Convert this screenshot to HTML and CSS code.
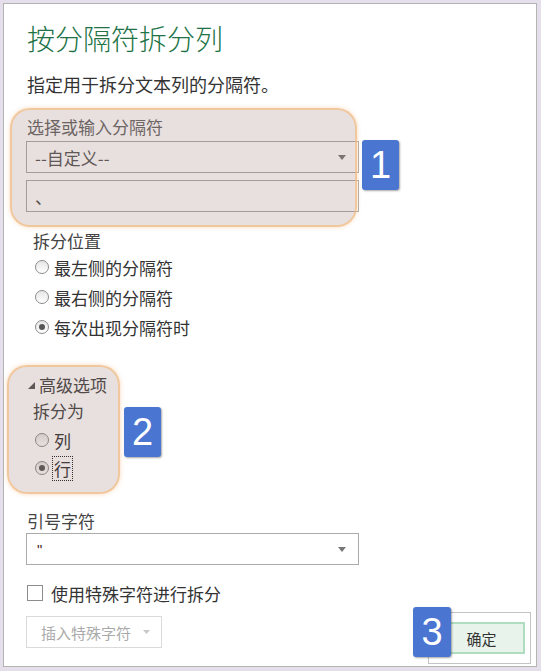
FILE: index.html
```html
<!DOCTYPE html>
<html lang="zh-CN">
<head>
<meta charset="utf-8">
<title>按分隔符拆分列</title>
<link rel="stylesheet" href="styles.css">
</head>
<body>
<div class="panel">
  <h1 class="title">按分隔符拆分列</h1>
  <p class="subtitle">指定用于拆分文本列的分隔符。</p>

  <div class="label sel-label">选择或输入分隔符</div>
  <div class="select sel-delim">
    <span class="sel-text">--自定义--</span>
    <svg class="arrow" width="8" height="5" viewBox="0 0 8 5"><polygon points="0,0 8,0 4,5"/></svg>
  </div>
  <div class="select text-input">、</div>

  <div class="label group-label">拆分位置</div>
  <div class="radios">
    <div class="radio-row"><span class="radio"></span><span>最左侧的分隔符</span></div>
    <div class="radio-row"><span class="radio"></span><span>最右侧的分隔符</span></div>
    <div class="radio-row"><span class="radio on"></span><span>每次出现分隔符时</span></div>
  </div>

  <div class="adv">
    <svg class="tri" width="7" height="7" viewBox="0 0 7 7"><polygon points="7,0 7,7 0,7"/></svg>
    <span>高级选项</span>
  </div>
  <div class="label split-as">拆分为</div>
  <div class="radios tight">
    <div class="radio-row"><span class="radio"></span><span>列</span></div>
    <div class="radio-row"><span class="radio on"></span><span class="focus">行</span></div>
  </div>

  <div class="label quote-label">引号字符</div>
  <div class="select sel-quote">
    <span class="quote">"</span>
    <svg class="arrow" width="8" height="5" viewBox="0 0 8 5"><polygon points="0,0 8,0 4,5"/></svg>
  </div>

  <div class="check-row"><span class="checkbox"></span><span>使用特殊字符进行拆分</span></div>

  <div class="footer">
    <div class="insert-btn">
      <span>插入特殊字符</span>
      <svg class="arrow light" width="7" height="4" viewBox="0 0 7 4"><polygon points="0,0 7,0 3.5,4"/></svg>
    </div>
    <div class="ok-wrap"><div class="ok-btn">确定</div></div>
  </div>

  <div class="hl hl1"></div>
  <div class="hl hl2"></div>
  <div class="badge b1">1</div>
  <div class="badge b2">2</div>
  <div class="badge b3">3</div>
</div>
</body>
</html>
```
FILE: styles.css
```css
html, body {
  margin: 0;
  padding: 0;
}
body {
  background: #e4dfeb;
  font-family: "Noto Sans CJK SC", "Noto Sans", sans-serif;
  color: #333;
}
.panel {
  position: relative;
  box-sizing: border-box;
  width: 534px;
  height: 664px;
  margin: 3px;
  background: #fff;
  border: 1px solid #b4b4b4;
  padding: 17px 5px 0 22px;
}
.title {
  margin: 0;
  font-size: 28px;
  line-height: 34px;
  font-weight: 300;
  color: #217346;
  padding-left: 1px;
}
.subtitle {
  margin: 17px 0 0;
  font-size: 18px;
  line-height: 24px;
  color: #333;
  padding-left: 1px;
}
.label {
  font-size: 17px;
  line-height: 22px;
  color: #444;
}
.sel-label {
  margin-top: 20px;
  color: #666;
  padding-left: 1px;
}
.select {
  box-sizing: border-box;
  width: 333px;
  height: 32px;
  border: 1px solid #ababab;
  display: flex;
  align-items: center;
  justify-content: space-between;
  padding: 0 12px 0 8px;
  font-size: 17px;
  color: #555;
  background: #fff;
}
.sel-delim {
  margin-top: 3px;
}
.text-input {
  margin-top: 7px;
  color: #444;
}
.arrow {
  fill: #777;
  flex: none;
}
.arrow.light {
  fill: #c8c8c8;
}
.group-label {
  margin-top: 18px;
  padding-left: 7px;
}
.radios {
  display: flex;
  flex-direction: column;
}
.radio-row {
  display: flex;
  align-items: center;
  gap: 5px;
  height: 30px;
  padding-left: 9px;
  font-size: 17px;
  color: #333;
}
.tight {
  margin-top: 4px;
}
.tight .radio-row {
  height: 28px;
}
.radio {
  position: relative;
  box-sizing: border-box;
  width: 14px;
  height: 14px;
  border-radius: 50%;
  border: 1px solid #8c8c8c;
  background: linear-gradient(#e6e6e6, #fff);
  flex: none;
}
.radio.on::after {
  content: "";
  position: absolute;
  left: 3px;
  top: 3px;
  width: 6px;
  height: 6px;
  border-radius: 50%;
  background: #555;
}
.focus {
  border: 1px dotted #222;
  padding: 0 1px;
  line-height: 23px;
  margin-left: -2px;
}
.adv {
  margin-top: 32px;
  display: flex;
  align-items: center;
  gap: 4px;
  padding-left: 2px;
  font-size: 17px;
  line-height: 22px;
  color: #444;
}
.tri {
  fill: #555;
  flex: none;
}
.split-as {
  margin-top: 4px;
  padding-left: 7px;
}
.quote-label {
  margin-top: 28px;
  padding-left: 1px;
}
.sel-quote {
  margin-top: 1px;
  padding-left: 10px;
}
.quote {
  font-family: "Liberation Sans", sans-serif;
  font-size: 15px;
  color: #4a2a2a;
}
.check-row {
  margin-top: 17px;
  display: flex;
  align-items: center;
  gap: 8px;
  padding-left: 1px;
  height: 22px;
  font-size: 17px;
  color: #333;
}
.checkbox {
  box-sizing: border-box;
  width: 16px;
  height: 16px;
  border: 1px solid #8c8c8c;
  background: #fff;
  flex: none;
}
.footer {
  margin-top: 12px;
  display: flex;
  justify-content: space-between;
  align-items: flex-start;
}
.insert-btn {
  box-sizing: border-box;
  width: 136px;
  height: 32px;
  border: 1px solid #dadada;
  display: flex;
  align-items: center;
  gap: 12px;
  padding-left: 14px;
  font-size: 15px;
  color: #aaa;
}
.ok-wrap {
  box-sizing: border-box;
  width: 103px;
  height: 52px;
  margin-top: -4px;
  border: 1px solid #c4c4c4;
  padding: 9px 5px 9px 9px;
}
.ok-btn {
  box-sizing: border-box;
  height: 32px;
  border: 2px solid #b0dcc0;
  background: #e8f3ec;
  display: flex;
  align-items: center;
  justify-content: center;
  font-size: 15px;
  color: #333;
}
.hl {
  position: absolute;
  box-sizing: border-box;
  border-radius: 20px;
  background: rgba(140, 100, 95, 0.2);
  border: 2px solid rgba(245, 190, 130, 0.7);
  box-shadow: 0 0 4px rgba(245, 180, 120, 0.5);
  pointer-events: none;
}
.hl1 {
  left: 6px;
  top: 104px;
  width: 347px;
  height: 119px;
}
.hl2 {
  left: 3px;
  top: 361px;
  width: 113px;
  height: 129px;
}
.badge {
  position: absolute;
  width: 37px;
  height: 50px;
  border-radius: 3px;
  background: #4a76d2;
  color: #fff;
  font-family: "Liberation Sans", sans-serif;
  font-size: 38px;
  display: flex;
  align-items: center;
  justify-content: center;
  box-shadow: 1px 1px 2px rgba(0, 0, 0, 0.35);
}
.b1 {
  left: 358px;
  top: 136px;
}
.b2 {
  left: 120px;
  top: 403px;
}
.b3 {
  left: 409px;
  top: 603px;
  width: 38px;
}
```
